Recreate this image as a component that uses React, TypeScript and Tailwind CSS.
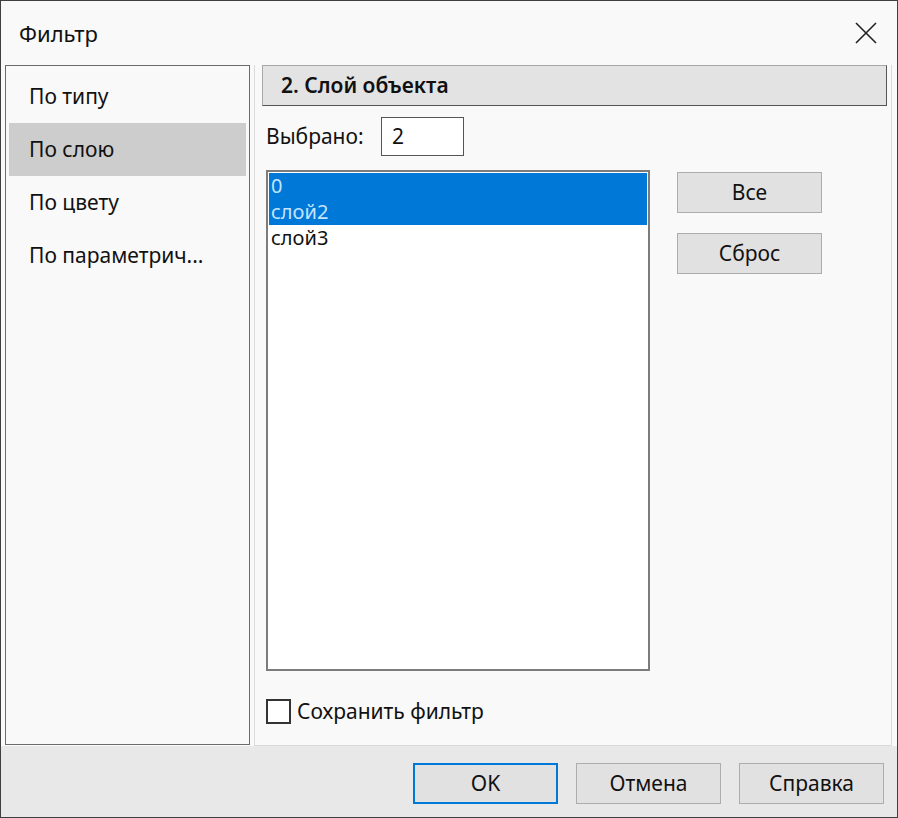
import { useState } from "react";

const tabs = ["По типу", "По слою", "По цвету", "По параметрич..."];

const layers = [
  { name: "0", selected: true },
  { name: "слой2", selected: true },
  { name: "слой3", selected: false },
];

const font = { fontFamily: '"Noto Sans", "DejaVu Sans", sans-serif' };

const Button = ({ label, primary = false }: { label: string; primary?: boolean }) => (
  <button
    className={
      "w-[145px] h-[41px] bg-[#e1e1e1] text-[21px] text-[#111] flex items-center justify-center " +
      (primary ? "border-2 border-[#0078d7]" : "border border-[#adadad]")
    }
  >
    {label}
  </button>
);

const App = () => {
  const [active, setActive] = useState(1);
  const [save, setSave] = useState(false);

  return (
    <div
      className="w-[898px] h-[818px] bg-[#f9f9f9] border border-[#3f3f3f] flex flex-col text-[#111]"
      style={font}
    >
      {/* Title bar */}
      <div className="h-[64px] flex items-center justify-between pl-[18px] pr-[20px]">
        <span className="text-[22px] leading-none">Фильтр</span>
        <svg width="22" height="22" viewBox="0 0 22 22" className="text-[#222]">
          <path d="M1 1L21 21M21 1L1 21" stroke="currentColor" strokeWidth="1.6" />
        </svg>
      </div>

      {/* Body */}
      <div className="h-[681px] flex pl-[4px] pr-[5px] gap-[4px]">
        {/* Left tabs */}
        <div className="w-[245px] h-[680px] border border-[#6b6b6b] bg-[#f9f9f9] pt-[4px] px-[3px] flex flex-col">
          {tabs.map((t, i) => (
            <div
              key={t}
              onClick={() => setActive(i)}
              className={
                "h-[53px] flex items-center pl-[20px] text-[21px] " +
                (i === active ? "bg-[#cdcdcd]" : "")
              }
            >
              {t}
            </div>
          ))}
        </div>

        {/* Right panel */}
        <div className="flex-1 border border-t-0 border-[#dadada] bg-[#f9f9f9] flex flex-col pl-[11px]">
          <div className="h-[41px] -ml-[4px] mr-[4px] bg-[#e3e3e3] border border-t-[#a8a8a8] border-l-[#a8a8a8] border-b-[#555] border-r-[#555] flex items-center pl-[18px] text-[21px] font-semibold">
            2. Слой объекта
          </div>

          <div className="mt-[11px] flex items-center">
            <span className="text-[21px] w-[115px]">Выбрано:</span>
            <div className="w-[83px] h-[39px] bg-white border border-[#555] flex items-center pl-[10px] text-[21px]">
              2
            </div>
          </div>

          <div className="mt-[14px] flex gap-[27px]">
            <div className="w-[384px] h-[501px] bg-white border-2 border-[#7c7c7c] p-[1px]">
              {layers.map((l) => (
                <div
                  key={l.name}
                  className={
                    "h-[26px] flex items-center pl-[2px] text-[20px] leading-none " +
                    (l.selected ? "bg-[#0078d7] text-[#c4e4ff]" : "text-[#111]")
                  }
                >
                  {l.name}
                </div>
              ))}
            </div>
            <div className="flex flex-col gap-[20px] pt-[2px]">
              <Button label="Все" />
              <Button label="Сброс" />
            </div>
          </div>

          <label className="mt-[25px] flex items-center gap-[6px] cursor-pointer">
            <span
              onClick={() => setSave(!save)}
              className="w-[25px] h-[25px] border-2 border-[#333] bg-white flex items-center justify-center"
            >
              {save && (
                <svg width="16" height="16" viewBox="0 0 16 16">
                  <path d="M2 8l4 4 8-9" fill="none" stroke="#111" strokeWidth="2" />
                </svg>
              )}
            </span>
            <span className="text-[21px]">Сохранить фильтр</span>
          </label>
        </div>
      </div>

      {/* Footer */}
      <div className="flex-1 bg-[#e8e8e8] flex justify-end items-start pt-[17px] pr-[13px] gap-[18px]">
        <Button label="OK" primary />
        <Button label="Отмена" />
        <Button label="Справка" />
      </div>
    </div>
  );
};

export default App;
